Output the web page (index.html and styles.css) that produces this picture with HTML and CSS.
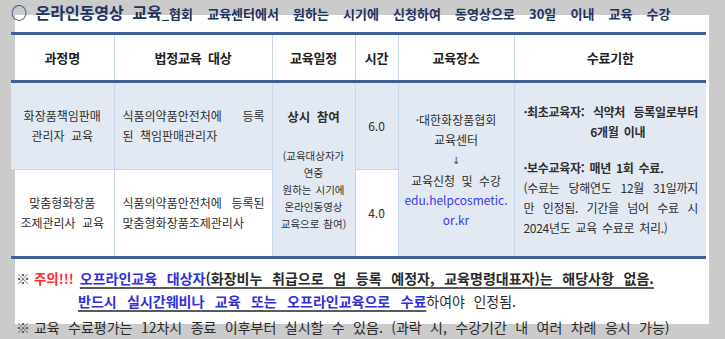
FILE: index.html
```html
<!DOCTYPE html>
<html lang="ko">
<head>
<meta charset="utf-8">
<title>온라인동영상 교육</title>
<link rel="stylesheet" href="styles.css">
</head>
<body>
<div class="page">
  <h1 class="title"><span class="title-main">○ 온라인동영상 교육</span><span class="title-sub">_협회 교육센터에서 원하는 시기에 신청하여 동영상으로 30일 이내 교육 수강</span></h1>
  <table class="course">
    <colgroup>
      <col class="w1"><col class="w2"><col class="w3"><col class="w4"><col class="w5"><col class="w6">
    </colgroup>
    <thead>
      <tr class="head">
        <th class="first">과정명</th><th>법정교육 대상</th><th>교육일정</th><th>시간</th><th>교육장소</th><th class="last">수료기한</th>
      </tr>
    </thead>
    <tbody>
      <tr class="r1">
        <td class="shade first center">화장품책임판매<br>관리자 교육</td>
        <td class="shade target"><span class="jl">식품의약품안전처에 등록</span><span class="line">된 책임판매관리자</span></td>
        <td class="shade schedule" rowspan="2">
          <div class="always">상시 참여</div>
          <div class="sched-note">(교육대상자가<br>연중<br>원하는 시기에<br>온라인동영상<br>교육으로 참여)</div>
        </td>
        <td class="shade center num">6.0</td>
        <td class="shade place" rowspan="2">·대한화장품협회<br>교육센터<br><span class="arrow">↓</span><br>교육신청 및 수강<br><span class="link">edu.helpcosmetic.<br>or.kr</span></td>
        <td class="shade deadline last" rowspan="2">
          <div class="b jl">·최초교육자: 식약처 등록일로부터</div>
          <div class="b ctr">6개월 이내</div>
          <div class="gap"></div>
          <div class="b">·보수교육자: 매년 1회 수료.</div>
          <div class="jl">(수료는 당해연도 12월 31일까지</div>
          <div class="jl">만 인정됨. 기간을 넘어 수료 시</div>
          <div class="line">2024년도 교육 수료로 처리.)</div>
        </td>
      </tr>
      <tr class="r2">
        <td class="first center">맞춤형화장품<br>조제관리사 교육</td>
        <td class="target"><span class="jl">식품의약품안전처에 등록된</span><span class="line">맞춤형화장품조제관리사</span></td>
        <td class="center num">4.0</td>
      </tr>
    </tbody>
  </table>
  <div class="notes">
    <p class="note-line"><span class="mark">※ </span><span class="warn">주의!!!</span><span class="ul strong first-ul"><span class="blue">오프라인교육 대상자</span>(화장비누 취급으로 업 등록 예정자, 교육명령대표자)는 해당사항 없음.</span></p>
    <p class="note-line indent"><span class="ul strong blue">반드시 실시간웨비나 교육 또는 오프라인교육으로 수료</span>하여야 인정됨.</p>
    <p class="note-line plain"><span class="mark">※ </span>교육 수료평가는 12차시 종료 이후부터 실시할 수 있음. (과락 시, 수강기간 내 여러 차례 응시 가능)</p>
  </div>
</div>
</body>
</html>
```

FILE: styles.css
```css
html {
  background: #cbcbcb;
}

body {
  margin: 0;
  font-family: "Noto Sans CJK KR", "Noto Sans", sans-serif;
  color: #2a2a2a;
}

.page {
  position: relative;
  z-index: 0;
  height: 339px;
  padding: 0 19px 0 11px;
  overflow: hidden;
}

.page::before {
  content: "";
  position: absolute;
  left: 15px;
  top: 15px;
  width: 694px;
  height: 309px;
  background: #ffffff;
  z-index: -1;
}

.title {
  margin: 0;
  height: 32px;
  line-height: 24px;
  white-space: nowrap;
  color: #1e335e;
  font-weight: 700;
  font-size: 13px;
  word-spacing: 10.5px;
}

.title-main {
  font-size: 16px;
  word-spacing: 4px;
}

.course {
  border-collapse: collapse;
  table-layout: fixed;
  width: 695px;
  border-top: 3px solid #3c6095;
  border-bottom: 3px solid #3c6095;
}

.w1 { width: 103px; }
.w2 { width: 158px; }
.w3 { width: 83px; }
.w4 { width: 43px; }
.w5 { width: 116px; }
.w6 { width: 192px; }

th,
td {
  border: 1px solid #c7d6eb;
  padding: 0;
  vertical-align: middle;
}

th {
  font-size: 13px;
  font-weight: 700;
  color: #222;
  letter-spacing: -0.2px;
  word-spacing: 3px;
  border-bottom: 3px solid #3c6095;
}

.head {
  height: 48px;
}

.r1,
.r2 {
  height: 88px;
}

td {
  font-size: 12px;
  line-height: 20px;
  word-spacing: 3px;
  color: #2e2e2e;
}

.first {
  border-left: none;
}

.last {
  border-right: none;
}

.shade {
  background: #e3e9f3;
}

.center {
  text-align: center;
}

.target {
  padding: 0 7px 0 8px;
}

.jl,
.line {
  display: block;
  text-align: justify;
  text-align-last: justify;
}

.line {
  text-align-last: left;
}

.schedule {
  text-align: center;
}

.always {
  font-weight: 700;
  font-size: 12.5px;
  line-height: 20px;
  margin-bottom: 20px;
}

.sched-note {
  font-size: 10.5px;
  line-height: 17px;
  word-spacing: 1px;
}

.place {
  text-align: center;
  line-height: 19.5px;
}

.arrow {
  font-family: "DejaVu Sans", sans-serif;
  font-size: 10px;
  color: #444;
}

.link {
  color: #3a3aef;
}

.deadline {
  padding: 0 8px 0 9px;
  font-size: 12px;
  line-height: 20px;
  letter-spacing: -0.3px;
  word-spacing: 2px;
}

.deadline .b {
  font-weight: 700;
}

.deadline .ctr {
  text-align: center;
  padding-left: 14px;
}

.gap {
  height: 16px;
}

.notes {
  padding: 8px 0 0 5px;
  font-size: 14px;
  color: #2a2a2a;
  word-spacing: 4.5px;
  white-space: nowrap;
}

.note-line {
  margin: 0;
  line-height: 23px;
}

.note-line.plain {
  line-height: 26px;
  margin-top: 1px;
}

.indent {
  padding-left: 62px;
}

.mark {
  color: #444;
  word-spacing: 0;
}

.warn {
  color: #ff2a2a;
  font-weight: 700;
  font-size: 13.5px;
  margin-right: 6px;
}

.strong {
  font-weight: 700;
  word-spacing: 6.5px;
}

.first-ul {
  word-spacing: 5.8px;
}

.blue {
  color: #2f2fe0;
}

.ul {
  text-decoration: underline;
  text-decoration-color: #5a5a5a;
  text-decoration-thickness: 2px;
  text-underline-offset: 3px;
}
```
